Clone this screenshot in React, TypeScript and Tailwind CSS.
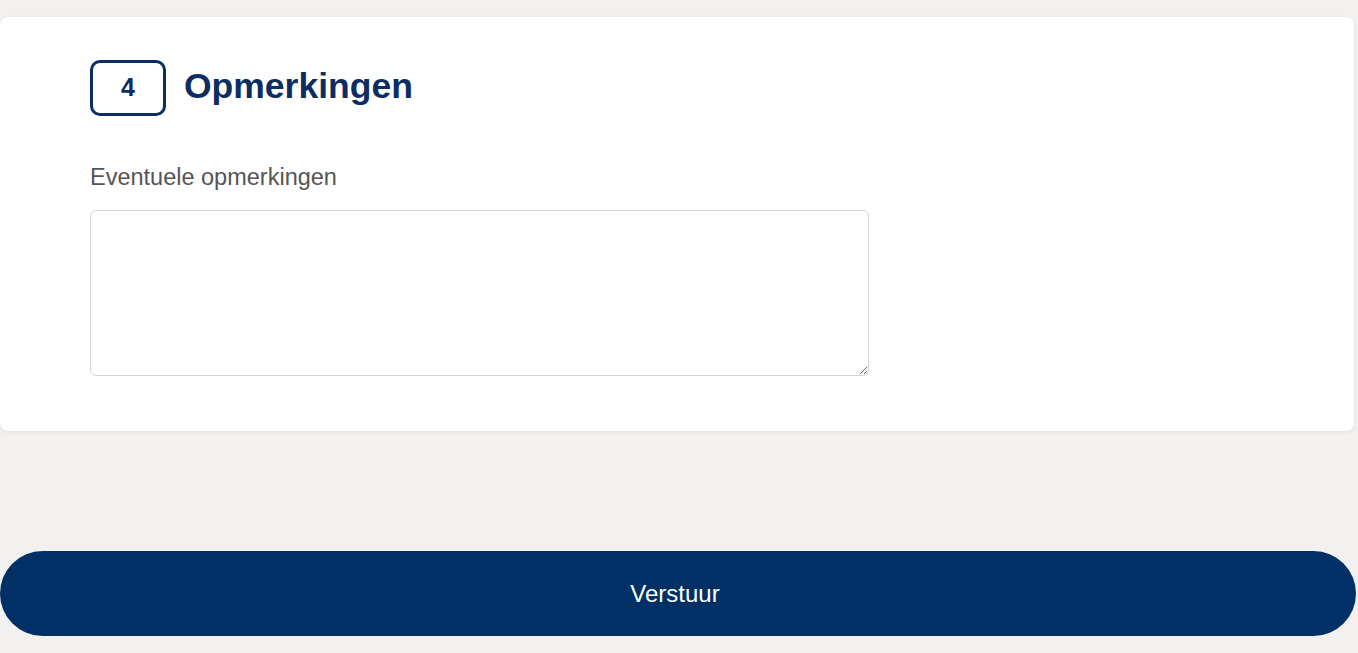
export default function App() {
  return (
    <div className="min-h-[653px] bg-[#f2f1f0] pt-[17px] font-['Liberation_Sans',Arial,sans-serif]">
      <section className="mr-[4px] h-[414px] rounded-lg bg-white px-[90px] pt-[43px] shadow-[0_1px_4px_rgba(0,0,0,0.08)]">
        <div className="flex items-center gap-[18px]">
          <div className="flex h-[56px] w-[76px] items-center justify-center rounded-[10px] border-[3px] border-[#0b2d63] text-[25px] font-bold text-[#0b2d63]">
            4
          </div>
          <h2 className="-mt-[3px] text-[35.5px] font-bold leading-none text-[#0b2d63]">Opmerkingen</h2>
        </div>
        <label className="mt-[50px] block text-[23.5px] leading-none text-[#555555]">Eventuele opmerkingen</label>
        <textarea className="mt-[20px] block h-[166px] w-[779px] rounded-md border border-[#d4d4d4] bg-white" />
      </section>
      <div className="pt-[120px]">
        <button className="flex h-[85px] w-[1356px] items-center justify-center rounded-full bg-[#003066] pr-[6px] text-[24px] text-white">
          Verstuur
        </button>
      </div>
    </div>
  );
}
